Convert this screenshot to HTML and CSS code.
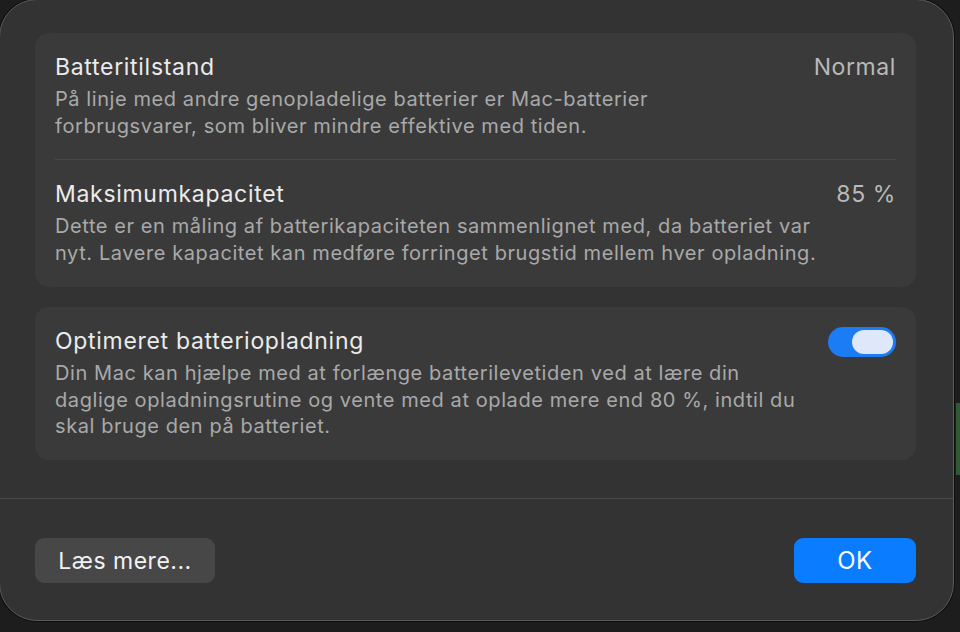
FILE: index.html
```html
<!DOCTYPE html>
<html lang="da">
<head>
<meta charset="utf-8">
<title>Batteri</title>
<link rel="stylesheet" href="styles.css">
</head>
<body>
<div class="desk">
  <div class="dialog">
    <div class="content">
      <section class="card">
        <div class="row">
          <div class="text">
            <div class="title">Batteritilstand</div>
            <div class="desc">På linje med andre genopladelige batterier er Mac-batterier<br>forbrugsvarer, som bliver mindre effektive med tiden.</div>
          </div>
          <div class="value">Normal</div>
        </div>
        <div class="sep"></div>
        <div class="row">
          <div class="text">
            <div class="title">Maksimumkapacitet</div>
            <div class="desc">Dette er en måling af batterikapaciteten sammenlignet med, da batteriet var<br>nyt. Lavere kapacitet kan medføre forringet brugstid mellem hver opladning.</div>
          </div>
          <div class="value">85 %</div>
        </div>
      </section>
      <section class="card">
        <div class="row row-toggle">
          <div class="text">
            <div class="title">Optimeret batteriopladning</div>
            <div class="desc">Din Mac kan hjælpe med at forlænge batterilevetiden ved at lære din<br>daglige opladningsrutine og vente med at oplade mere end 80 %, indtil du<br>skal bruge den på batteriet.</div>
          </div>
          <div class="toggle"><div class="knob"></div></div>
        </div>
      </section>
    </div>
    <div class="footer">
      <button class="btn btn-plain">Læs mere...</button>
      <button class="btn btn-primary">OK</button>
    </div>
  </div>
  <div class="side-strip"></div>
</div>
</body>
</html>
```

FILE: styles.css
```css
* { box-sizing: border-box; }
html, body {
  margin: 0;
  padding: 0;
  width: 960px;
  height: 632px;
  overflow: hidden;
  background: #1d1d1d;
  font-family: Inter, "Noto Sans", "Liberation Sans", sans-serif;
  -webkit-font-smoothing: antialiased;
}
.desk {
  display: flex;
  align-items: flex-start;
  height: 632px;
}
.dialog {
  width: 955px;
  height: 622px;
  margin-left: -1px;
  margin-top: -1px;
  background: #333333;
  border: 1px solid #5c5c5c;
  border-radius: 38px;
  box-shadow: 0 0 0 1px #0e0e0e;
  display: flex;
  flex-direction: column;
  flex: none;
}
.side-strip {
  width: 6px;
  height: 72px;
  margin-top: 403px;
  margin-left: 2px;
  background: #2f5a35;
  flex: none;
}
.content {
  padding: 33px 37px 0 35px;
  display: flex;
  flex-direction: column;
  gap: 20px;
  height: 499px;
  border-bottom: 1px solid #4a4a4a;
}
.card {
  background: #3a3a3a;
  border-radius: 14px;
  padding: 0 20px;
}
.row {
  display: flex;
  justify-content: space-between;
  align-items: flex-start;
  padding: 20px 0 20px;
}
.row + .sep + .row {
  padding-bottom: 21px;
}
.row:first-child {
  padding-bottom: 20px;
}
.row-toggle {
  padding: 20px 0 19px;
}
.title {
  color: #ebebeb;
  font-size: 23px;
  line-height: 28px;
  font-weight: 400;
  letter-spacing: 0.7px;
  white-space: nowrap;
}
.desc {
  margin-top: 5px;
  color: #a9a9a9;
  font-size: 20px;
  line-height: 26.5px;
  letter-spacing: 0.58px;
  white-space: nowrap;
}
.value {
  color: #b9b9b9;
  font-size: 23px;
  line-height: 28px;
  letter-spacing: 0.6px;
  white-space: nowrap;
}
.sep {
  height: 1px;
  background: #4a4a4a;
}
.toggle {
  width: 68px;
  height: 30px;
  border-radius: 15px;
  background: #1b7cf4;
  padding: 3px;
  display: flex;
  justify-content: flex-end;
}
.knob {
  width: 41px;
  height: 24px;
  border-radius: 12px;
  background: #dfe8fa;
}
.footer {
  flex: 1;
  display: flex;
  justify-content: space-between;
  align-items: flex-start;
  padding: 39px 37px 0 35px;
}
.btn {
  border: none;
  font-family: Inter, "Noto Sans", "Liberation Sans", sans-serif;
  font-size: 23px;
  line-height: 28px;
  letter-spacing: 0.5px;
  color: #f2f2f2;
  border-radius: 9px;
  height: 45px;
}
.btn-plain {
  width: 180px;
  background: #474747;
}
.btn-primary {
  width: 122px;
  background: #0a7cff;
  color: #ffffff;
  font-size: 24px;
}
```
